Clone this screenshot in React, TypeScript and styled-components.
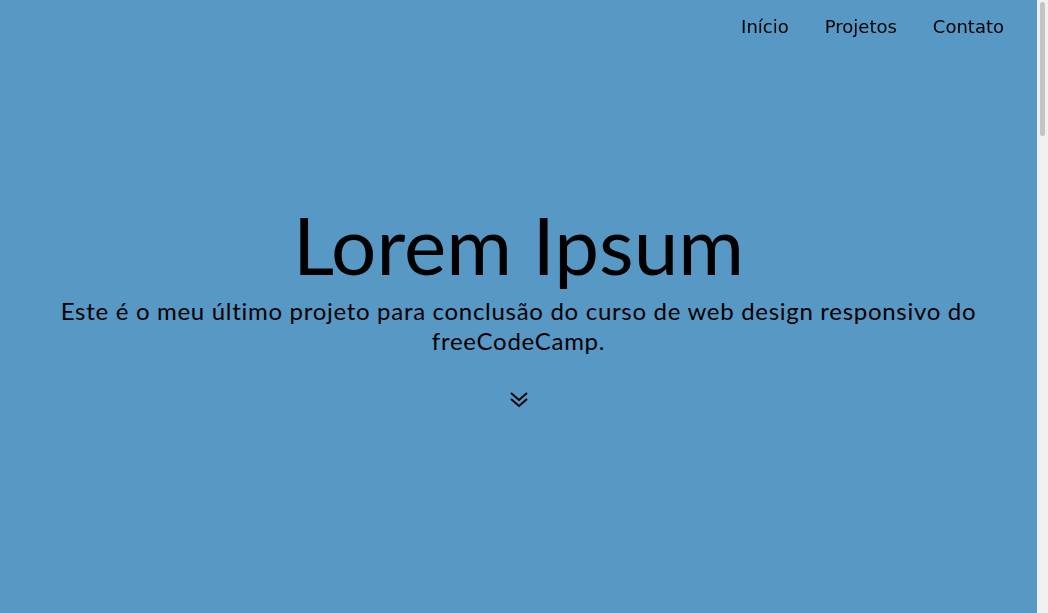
import React from "react";
import styled, { createGlobalStyle } from "styled-components";

const Global = createGlobalStyle`
  html, body {
    margin: 0;
    padding: 0;
    height: 100%;
    overflow: hidden;
    background: #5898c4;
  }
  body {
    font-family: "DejaVu Sans", sans-serif;
    color: #000;
  }
  * { box-sizing: border-box; }
`;

const Frame = styled.div`
  display: grid;
  grid-template-columns: 1fr 11px;
  height: 100vh;
`;

const Main = styled.main`
  position: relative;
  height: 100vh;
  overflow-y: auto;
  scrollbar-width: none;
  &::-webkit-scrollbar { display: none; }
`;

const ScrollRail = styled.div`
  background: #f1f1f1;
  padding: 2px 3px;
`;

const ScrollThumb = styled.div`
  height: 134px;
  border-radius: 3px;
  background: #c4c4c4;
`;

const Nav = styled.nav`
  position: sticky;
  top: 0;
  height: 54px;
  margin-bottom: -54px;
  display: flex;
  align-items: flex-start;
  justify-content: flex-end;
  gap: 36px;
  padding: 16px 33px 0 0;
  z-index: 10;
`;

const NavLink = styled.a`
  font-family: "DejaVu Sans", sans-serif;
  font-size: 18px;
  line-height: 22px;
  color: #000;
  text-decoration: none;
`;

const Hero = styled.section`
  min-height: 100vh;
  display: flex;
  flex-direction: column;
  align-items: center;
  justify-content: center;
  text-align: center;
  padding: 0 40px;
`;

const Title = styled.h1`
  margin: 0 0 11px;
  font-family: Lato, sans-serif;
  font-weight: 400;
  font-size: 80px;
  line-height: 81px;
`;

const Lead = styled.p`
  margin: 0;
  max-width: 930px;
  font-family: Lato, sans-serif;
  font-weight: 400;
  font-size: 24px;
  letter-spacing: 0.7px;
  line-height: 30px;
`;

const Down = styled.a`
  display: block;
  margin-top: 35px;
  width: 20px;
  height: 18px;
  color: #000;
`;

const Section = styled.section`
  min-height: 1095px;
  padding: 80px 40px;
  text-align: center;
  font-family: Lato, sans-serif;
`;

const SectionTitle = styled.h2`
  margin: 0 0 24px;
  font-family: Lato, sans-serif;
  font-weight: 400;
  font-size: 40px;
`;

export default function App() {
  return (
    <>
      <Global />
      <Frame>
        <Main>
          <Nav>
            <NavLink href="#inicio">Início</NavLink>
            <NavLink href="#projetos">Projetos</NavLink>
            <NavLink href="#contato">Contato</NavLink>
          </Nav>
          <Hero id="inicio">
            <Title>Lorem Ipsum</Title>
            <Lead>
              Este é o meu último projeto para conclusão do curso de web design
              responsivo do freeCodeCamp.
            </Lead>
            <Down href="#projetos" aria-label="Descer">
              <svg width="20" height="18" viewBox="0 0 20 18" fill="none" stroke="currentColor" strokeWidth="2">
                <polyline points="2,2 10,9 18,2" />
                <polyline points="2,8 10,15 18,8" />
              </svg>
            </Down>
          </Hero>
          <Section id="projetos">
            <SectionTitle>Projetos</SectionTitle>
          </Section>
          <Section id="contato">
            <SectionTitle>Contato</SectionTitle>
          </Section>
        </Main>
        <ScrollRail aria-hidden="true">
          <ScrollThumb />
        </ScrollRail>
      </Frame>
    </>
  );
}
